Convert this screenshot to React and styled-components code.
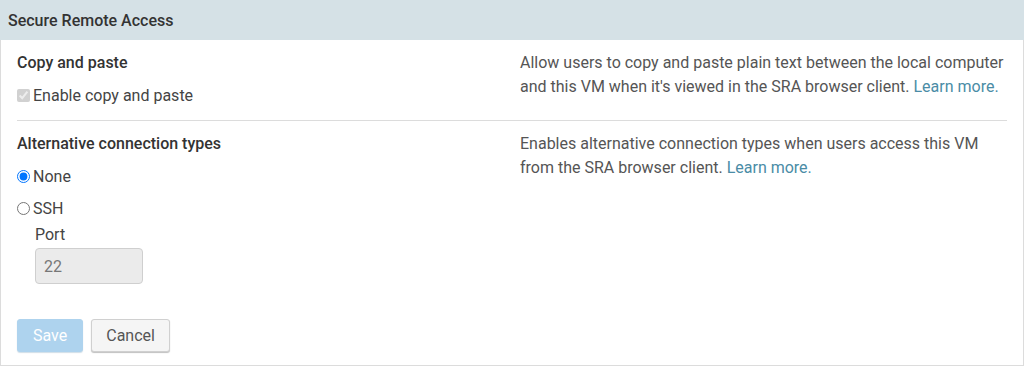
import React from "react";
import styled, { createGlobalStyle } from "styled-components";

const Global = createGlobalStyle`
  html, body { margin: 0; padding: 0; background: #fff; }
  body { font-family: Roboto, "Liberation Sans", Arial, sans-serif; color: #444; }
  * { box-sizing: border-box; }
`;

const Panel = styled.div`
  width: 1024px;
  height: 366px;
  display: flex;
  flex-direction: column;
`;

const Header = styled.div`
  height: 40px;
  background: #d5e1e6;
  padding: 0 8px;
  display: flex;
  align-items: center;
  font-size: 16px;
  font-weight: 500;
  color: #333;
`;

const Body = styled.div`
  flex: 1;
  border: 1px solid #dcdcdc;
  border-top: none;
  padding: 0 16px;
  display: flex;
  flex-direction: column;
`;

const Section = styled.div`
  display: grid;
  grid-template-columns: 1fr 1fr;
  column-gap: 16px;
  padding: ${(p) => (p.$first ? "11px 0 13px" : "11px 0 12px")};
  border-bottom: ${(p) => (p.$divider ? "1px solid #dcdcdc" : "none")};
`;

const Left = styled.div`
  display: flex;
  flex-direction: column;
  gap: 8px;
`;

const Heading = styled.div`
  font-size: 16px;
  font-weight: 500;
  line-height: 24px;
  color: #333;
`;

const OptionRow = styled.label`
  display: flex;
  align-items: center;
  height: 24px;
  font-size: 16px;
  color: #444;
  input {
    margin: 0 3px 0 0;
    width: 13px;
    height: 13px;
  }
`;

const SubField = styled.div`
  padding-left: 18px;
  display: flex;
  flex-direction: column;
  margin-top: -5px;
`;

const FieldLabel = styled.div`
  font-size: 16px;
  line-height: 24px;
  color: #444;
  margin-bottom: 1px;
`;

const TextInput = styled.input`
  width: 108px;
  height: 36px;
  border: 1px solid #cfcfcf;
  border-radius: 4px;
  background: #ebebeb;
  padding: 0 8px;
  font-family: inherit;
  font-size: 16px;
  color: #777;
`;

const Description = styled.p`
  margin: 0;
  font-size: 16px;
  line-height: 24px;
  color: #555;
`;

const Link = styled.a`
  color: #4a8ca6;
  text-decoration: none;
`;

const Footer = styled.div`
  display: flex;
  gap: 8px;
  padding-top: 23px;
`;

const Button = styled.button`
  height: 33px;
  padding: 0 ${(p) => (p.$primary ? "15px" : "14px")};
  border-radius: 3px;
  font-family: inherit;
  font-size: 16px;
  border: 1px solid ${(p) => (p.$primary ? "#aed3ee" : "#d0d0d0")};
  background: ${(p) => (p.$primary ? "#aed3ee" : "#f5f5f5")};
  color: ${(p) => (p.$primary ? "#fff" : "#555")};
  box-shadow: 0 1px 1px ${(p) => (p.$primary ? "rgba(120,160,190,0.35)" : "rgba(0,0,0,0.25)")};
`;

export default function App() {
  return (
    <>
      <Global />
      <Panel>
        <Header>Secure Remote Access</Header>
        <Body>
          <Section $first $divider>
            <Left>
              <Heading>Copy and paste</Heading>
              <OptionRow>
                <input type="checkbox" checked disabled readOnly />
                Enable copy and paste
              </OptionRow>
            </Left>
            <Description>
              Allow users to copy and paste plain text between the local computer and this VM when it's viewed in the SRA browser client.{" "}
              <Link href="#">Learn more.</Link>
            </Description>
          </Section>
          <Section>
            <Left>
              <Heading>Alternative connection types</Heading>
              <OptionRow>
                <input type="radio" name="conn" defaultChecked />
                None
              </OptionRow>
              <OptionRow>
                <input type="radio" name="conn" />
                SSH
              </OptionRow>
              <SubField>
                <FieldLabel>Port</FieldLabel>
                <TextInput defaultValue="22" disabled />
              </SubField>
            </Left>
            <Description>
              Enables alternative connection types when users access this VM from the SRA browser client.{" "}
              <Link href="#">Learn more.</Link>
            </Description>
          </Section>
          <Footer>
            <Button $primary disabled>Save</Button>
            <Button>Cancel</Button>
          </Footer>
        </Body>
      </Panel>
    </>
  );
}
